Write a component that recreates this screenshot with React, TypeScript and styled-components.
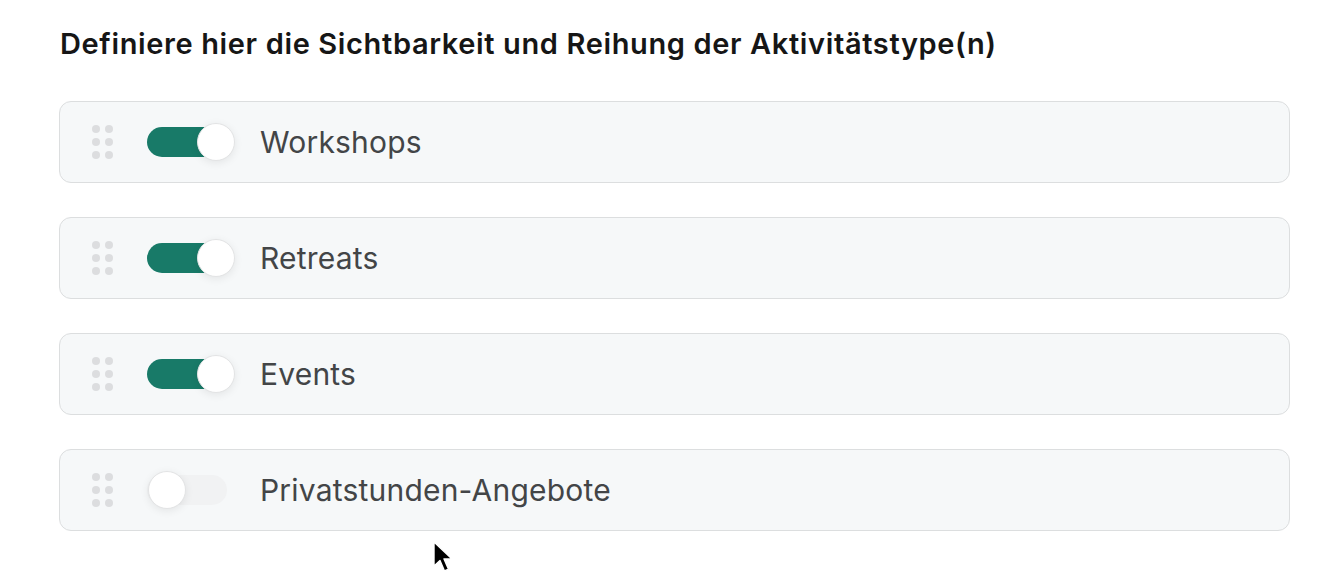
import * as React from "react";
import styled, { createGlobalStyle } from "styled-components";

const GlobalStyle = createGlobalStyle`
  html, body {
    margin: 0;
    padding: 0;
    background: #ffffff;
  }
  body {
    font-family: Inter, "Noto Sans", "Liberation Sans", sans-serif;
    -webkit-font-smoothing: antialiased;
  }
`;

interface ActivityType {
  id: string;
  label: string;
  visible: boolean;
}

const activityTypes: ActivityType[] = [
  { id: "workshops", label: "Workshops", visible: true },
  { id: "retreats", label: "Retreats", visible: true },
  { id: "events", label: "Events", visible: true },
  { id: "private", label: "Privatstunden-Angebote", visible: false },
];

const Page = styled.div`
  position: relative;
  width: 1328px;
  height: 588px;
  padding: 26px 38px 0 59px;
  box-sizing: border-box;
`;

const Heading = styled.h2`
  margin: 0 0 39px 1px;
  font-size: 29px;
  font-weight: 600;
  line-height: 36px;
  color: #161616;
  letter-spacing: 0.63px;
`;

const List = styled.div`
  display: flex;
  flex-direction: column;
  gap: 34px;
`;

const Card = styled.div`
  display: flex;
  align-items: center;
  height: 82px;
  box-sizing: border-box;
  padding: 0 0 0 32px;
  background: #f6f8f9;
  border: 1.5px solid #dcdedf;
  border-radius: 12px;
`;

const Handle = styled.div`
  display: grid;
  grid-template-columns: repeat(2, 8px);
  grid-auto-rows: 8px;
  column-gap: 5px;
  row-gap: 5px;
  margin-right: 34px;

  span {
    width: 8px;
    height: 8px;
    border-radius: 50%;
    background: #dcdddf;
  }
`;

const Track = styled.div<{ $on: boolean }>`
  position: relative;
  width: 80px;
  height: 30px;
  border-radius: 15px;
  background: ${(p) => (p.$on ? "#187a68" : "#f1f2f3")};
  margin-right: 33px;
  flex-shrink: 0;
`;

const Thumb = styled.div<{ $on: boolean }>`
  position: absolute;
  top: -4px;
  left: ${(p) => (p.$on ? "50px" : "1px")};
  width: 38px;
  height: 38px;
  box-sizing: border-box;
  border-radius: 50%;
  background: #ffffff;
  border: 1.5px solid #e3e4e5;
  box-shadow: 0 2px 8px rgba(0, 0, 0, 0.08);
`;

const Label = styled.span`
  font-size: 30px;
  font-weight: 400;
  color: #434547;
  letter-spacing: 0.2px;
`;

const Cursor = styled.svg`
  position: absolute;
  left: 432px;
  top: 541px;
`;

const DragHandle = () => (
  <Handle>
    {Array.from({ length: 6 }).map((_, i) => (
      <span key={i} />
    ))}
  </Handle>
);

const Toggle = ({ on }: { on: boolean }) => (
  <Track $on={on}>
    <Thumb $on={on} />
  </Track>
);

const App = () => (
  <Page>
    <GlobalStyle />
    <Heading>Definiere hier die Sichtbarkeit und Reihung der Aktivitätstype(n)</Heading>
    <List>
      {activityTypes.map((t) => (
        <Card key={t.id}>
          <DragHandle />
          <Toggle on={t.visible} />
          <Label>{t.label}</Label>
        </Card>
      ))}
    </List>
    <Cursor width="24" height="34" viewBox="0 0 24 34">
      <path
        d="M2 1 L2 25 L8 19.5 L12.5 30 L16.5 28.2 L12 18 L20 18 Z"
        fill="#000"
        stroke="#fff"
        strokeWidth="1.4"
        strokeLinejoin="round"
      />
    </Cursor>
  </Page>
);

export default App;
